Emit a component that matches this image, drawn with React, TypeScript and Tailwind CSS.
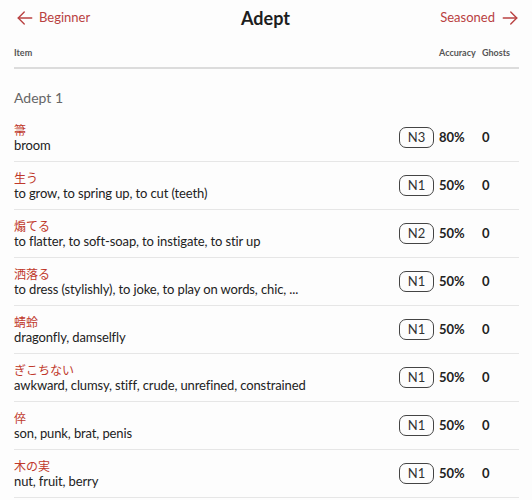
import React from "react";

const rows = [
  { jp: "箒", en: "broom", lvl: "N3", acc: "80%", g: "0" },
  { jp: "生う", en: "to grow, to spring up, to cut (teeth)", lvl: "N1", acc: "50%", g: "0" },
  { jp: "煽てる", en: "to flatter, to soft-soap, to instigate, to stir up", lvl: "N2", acc: "50%", g: "0" },
  { jp: "洒落る", en: "to dress (stylishly), to joke, to play on words, chic, ...", lvl: "N1", acc: "50%", g: "0" },
  { jp: "蜻蛉", en: "dragonfly, damselfly", lvl: "N1", acc: "50%", g: "0" },
  { jp: "ぎこちない", en: "awkward, clumsy, stiff, crude, unrefined, constrained", lvl: "N1", acc: "50%", g: "0" },
  { jp: "倅", en: "son, punk, brat, penis", lvl: "N1", acc: "50%", g: "0" },
  { jp: "木の実", en: "nut, fruit, berry", lvl: "N1", acc: "50%", g: "0" },
];

const Arrow = ({ dir }: { dir: "left" | "right" }) => (
  <svg width="18" height="18" viewBox="0 0 24 24" fill="none" stroke="currentColor" strokeWidth="1.8" strokeLinecap="round" strokeLinejoin="round">
    {dir === "left" ? (
      <>
        <path d="M21 12H3" />
        <path d="M11 4l-8 8 8 8" />
      </>
    ) : (
      <>
        <path d="M3 12h18" />
        <path d="M13 4l8 8-8 8" />
      </>
    )}
  </svg>
);

export default function App() {
  return (
    <div
      className="w-[532px] h-[500px] overflow-hidden bg-[#fdfdfd] text-[#222]"
      style={{ fontFamily: "Lato, 'Noto Sans CJK JP', sans-serif" }}
    >
      <div className="pl-[14px] pr-[13px]">
        <div className="grid grid-cols-3 items-center h-[36px]">
          <div className="flex items-center gap-[5px] text-[#b94141] text-[13px] pl-[2px]">
            <Arrow dir="left" />
            <span>Beginner</span>
          </div>
          <div className="text-[18px] font-bold text-[#1e1e1e] text-center pr-[2px]">Adept</div>
          <div className="flex items-center justify-end gap-[6px] text-[#b94141] text-[13px]">
            <span>Seasoned</span>
            <Arrow dir="right" />
          </div>
        </div>
        <div className="flex items-end h-[33px] pb-[9px] border-b-2 border-[#dcdcdc] text-[9px] leading-[11px] font-bold text-[#555]">
          <div className="flex-1">Item</div>
          <div className="w-[43px]">Accuracy</div>
          <div className="w-[37px]">Ghosts</div>
        </div>
        <div className="pt-[21px] pb-[8px] text-[14px] leading-[16px] text-[#666]">Adept 1</div>
        {rows.map((r, i) => (
          <div key={i} className="flex items-center h-[48px] border-b border-[#e6e6e6]">
            <div className="flex-1 flex flex-col leading-[14px] pt-[1px]">
              <span className="text-[12px] text-[#c0392b]">{r.jp}</span>
              <span className="text-[13px] text-[#222] tracking-[-0.12px]">{r.en}</span>
            </div>
            <div className="w-[35px] h-[21px] mr-[5px] rounded-[7px] border border-[#444] flex items-center justify-center text-[13px] text-[#333]">
              {r.lvl}
            </div>
            <div className="w-[43px] text-[13px] font-bold">{r.acc}</div>
            <div className="w-[37px] text-[13px] font-bold">{r.g}</div>
          </div>
        ))}
      </div>
    </div>
  );
}
